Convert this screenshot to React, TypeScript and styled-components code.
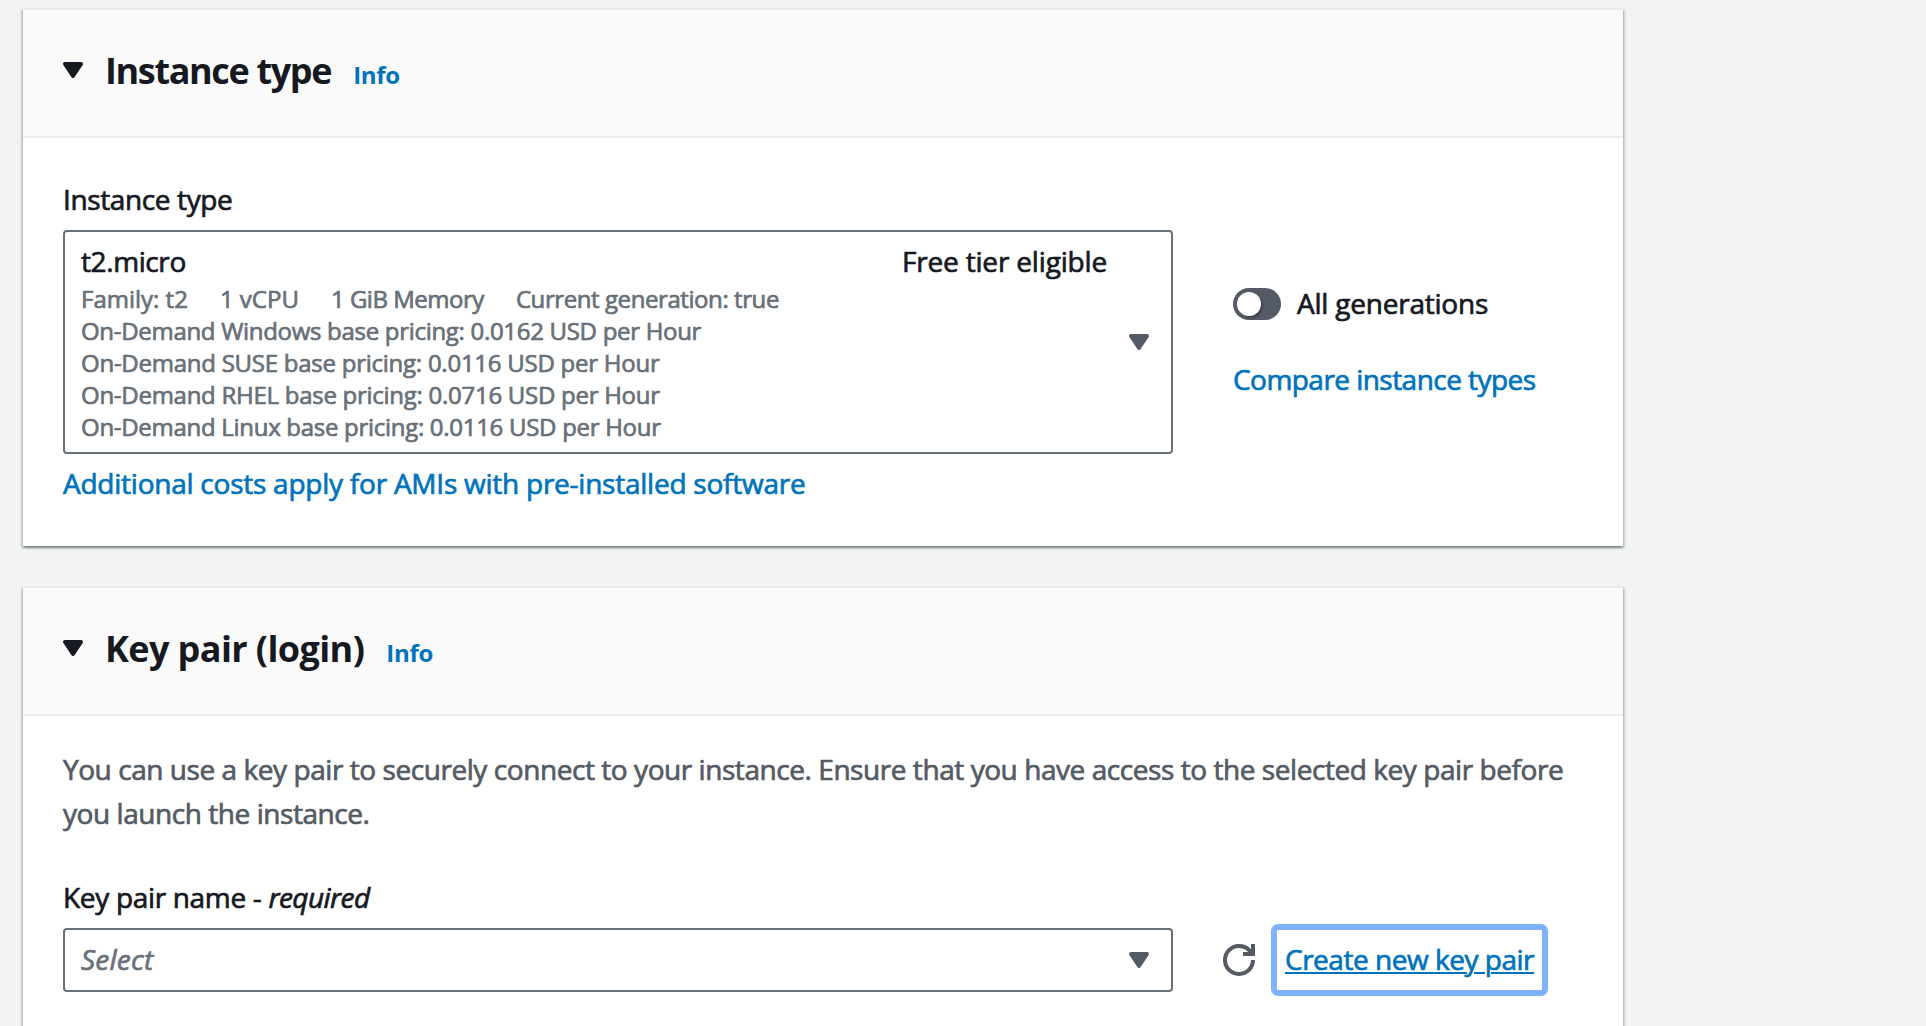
import React from 'react';
import styled, { createGlobalStyle } from 'styled-components';

const color = {
  page: '#f2f3f3',
  headerBg: '#fafafa',
  divider: '#eaeded',
  text: '#16191f',
  body: '#545b64',
  muted: '#687078',
  link: '#0073bb',
  focus: '#80b1fc',
};

const GlobalStyle = createGlobalStyle`
  * { box-sizing: border-box; }
  body {
    margin: 0;
    background: ${color.page};
    color: ${color.text};
    font-family: "Open Sans", "Noto Sans", sans-serif;
    font-size: 28px;
    line-height: 44px;
    -webkit-text-stroke: 0.7px currentColor;
  }
`;

interface Tracked {
  $track?: number;
}

const Page = styled.main`
  display: flex;
  flex-direction: column;
  gap: 40px;
  height: 100vh;
  padding: 8px 0 0 23px;
  overflow: hidden;
`;

const Panel = styled.section`
  flex: none;
  width: 1600px;
  background: #fff;
  border-top: 2px solid ${color.divider};
  box-shadow:
    0 2px 2px 0 rgba(0, 28, 36, 0.3),
    2px 2px 2px 0 rgba(0, 28, 36, 0.15),
    -2px 2px 2px 0 rgba(0, 28, 36, 0.15);
`;

const PanelHeader = styled.header`
  display: flex;
  align-items: flex-start;
  height: 128px;
  padding: 38px 40px 0 34px;
  background: ${color.headerBg};
  border-bottom: 2px solid ${color.divider};
`;

const HeaderCaret = styled.span`
  display: flex;
  height: 44px;
  align-items: center;
  margin-right: 16px;
`;

const TitleLine = styled.div`
  display: flex;
  align-items: baseline;
  gap: 22px;
  padding-top: 1px;
`;

const Title = styled.h2<Tracked>`
  margin: 0;
  font-size: 36px;
  font-weight: 700;
  line-height: 44px;
  letter-spacing: ${(p) => p.$track ?? 0}px;
  -webkit-text-stroke: 0;
`;

const InfoLink = styled.a`
  color: ${color.link};
  font-size: 24px;
  font-weight: 700;
  line-height: 32px;
  letter-spacing: -0.3px;
  -webkit-text-stroke: 0;
`;

const InstanceBody = styled.div`
  display: flex;
  align-items: flex-start;
  gap: 60px;
  height: 408px;
  padding: 39px 40px 0;
`;

const KeyPairBody = styled.div`
  height: 360px;
  padding: 31px 40px 0;
`;

const Field = styled.div`
  display: flex;
  flex-direction: column;
  width: 1110px;
`;

const Label = styled.label<Tracked>`
  display: block;
  margin-bottom: 9px;
  letter-spacing: ${(p) => p.$track ?? 0}px;

  em {
    letter-spacing: -0.55px;
  }
`;

const SelectBox = styled.div<{ $tall?: boolean }>`
  display: flex;
  align-items: center;
  width: 1110px;
  height: ${(p) => (p.$tall ? 224 : 64)}px;
  padding: 0 16px;
  background: #fff;
  border: 2px solid ${color.muted};
  border-radius: 4px;
`;

const Option = styled.div`
  flex: 1;
  display: flex;
  flex-direction: column;
  gap: 2px;
`;

const OptionTitle = styled.div`
  display: flex;
  justify-content: space-between;
  line-height: 40px;
`;

const OptionLines = styled.div`
  color: ${color.muted};
  font-size: 24px;
  line-height: 32px;
`;

const SpecRow = styled.div`
  display: flex;
  gap: 32px;
`;

const Text = styled.span<Tracked>`
  display: block;
  letter-spacing: ${(p) => p.$track ?? 0}px;
  white-space: nowrap;
`;

const Placeholder = styled.span`
  flex: 1;
  padding-bottom: 2px;
  color: ${color.muted};
  font-style: italic;
  letter-spacing: 0.25px;
`;

const BoxCaret = styled.span`
  display: flex;
  margin-left: 16px;
  color: ${color.body};
`;

const Link = styled.a<Tracked>`
  color: ${color.link};
  letter-spacing: ${(p) => p.$track ?? 0}px;
  white-space: nowrap;
`;

const CostLink = styled(Link)`
  margin-top: 7px;
`;

const Side = styled.div`
  display: flex;
  flex-direction: column;
  align-items: flex-start;
  gap: 32px;
  padding-top: 104px;
`;

const ToggleRow = styled.div`
  display: flex;
  gap: 16px;
`;

const Toggle = styled.span`
  display: flex;
  width: 48px;
  height: 32px;
  margin-top: 7px;
  padding: 4px;
  background: ${color.body};
  border-radius: 16px;
`;

const Knob = styled.span`
  width: 24px;
  height: 24px;
  background: #fff;
  border-radius: 50%;
  box-shadow: 2px 2px 2px rgba(0, 0, 0, 0.25);
`;

const Description = styled.p`
  margin: 0 0 40px;
  color: ${color.body};
  letter-spacing: -0.44px;
`;

const KeyPairRow = styled.div`
  display: flex;
  align-items: center;
`;

const RefreshButton = styled.button`
  display: flex;
  margin: 0 16px 0 50px;
  padding: 0;
  background: none;
  border: 0;
  color: ${color.body};
`;

const CreateLink = styled.a`
  height: 72px;
  margin: -4px 0;
  padding: 7px 8px 0;
  border: 6px solid ${color.focus};
  border-radius: 7px;
  color: ${color.link};
  letter-spacing: -0.48px;
  white-space: nowrap;
  text-decoration: underline;
  text-decoration-thickness: 2px;
  text-underline-offset: 2px;
`;

const Caret = () => (
  <svg width="32" height="32" viewBox="0 0 16 16" aria-hidden="true">
    <path d="M4 5h8l-4 6-4-6z" fill="currentColor" stroke="currentColor" strokeWidth="2" strokeLinejoin="round" />
  </svg>
);

const RefreshIcon = () => (
  <svg width="32" height="32" viewBox="0 0 16 16" fill="none" stroke="currentColor" strokeWidth="2" aria-hidden="true">
    <path d="M10 5h5V0" />
    <path d="M15 8a6.957 6.957 0 0 1-7 7 6.957 6.957 0 0 1-7-7 6.957 6.957 0 0 1 7-7 6.87 6.87 0 0 1 6.3 4" />
  </svg>
);

interface HeaderProps {
  title: string;
  track: number;
}

const SectionHeader = ({ title, track }: HeaderProps) => (
  <PanelHeader>
    <HeaderCaret>
      <Caret />
    </HeaderCaret>
    <TitleLine>
      <Title $track={track}>{title}</Title>
      <InfoLink>Info</InfoLink>
    </TitleLine>
  </PanelHeader>
);

const specs = [
  { text: 'Family: t2', track: 0 },
  { text: '1 vCPU', track: 0 },
  { text: '1 GiB Memory', track: -0.48 },
  { text: 'Current generation: true', track: -0.42 },
];

const prices = [
  { text: 'On-Demand Windows base pricing: 0.0162 USD per Hour', track: -0.3 },
  { text: 'On-Demand SUSE base pricing: 0.0116 USD per Hour', track: -0.25 },
  { text: 'On-Demand RHEL base pricing: 0.0716 USD per Hour', track: -0.27 },
  { text: 'On-Demand Linux base pricing: 0.0116 USD per Hour', track: -0.29 },
];

export default function App() {
  return (
    <>
      <GlobalStyle />
      <Page>
        <Panel>
          <SectionHeader title="Instance type" track={-1.36} />
          <InstanceBody>
            <Field>
              <Label $track={-0.38}>Instance type</Label>
              <SelectBox $tall>
                <Option>
                  <OptionTitle>
                    <Text $track={-0.4}>t2.micro</Text>
                    <Text $track={-0.17}>Free tier eligible</Text>
                  </OptionTitle>
                  <OptionLines>
                    <SpecRow>
                      {specs.map((s) => (
                        <Text key={s.text} $track={s.track}>{s.text}</Text>
                      ))}
                    </SpecRow>
                    {prices.map((p) => (
                      <Text key={p.text} $track={p.track}>{p.text}</Text>
                    ))}
                  </OptionLines>
                </Option>
                <BoxCaret>
                  <Caret />
                </BoxCaret>
              </SelectBox>
              <CostLink $track={-0.24}>Additional costs apply for AMIs with pre-installed software</CostLink>
            </Field>
            <Side>
              <ToggleRow>
                <Toggle>
                  <Knob />
                </Toggle>
                <Text $track={-0.22}>All generations</Text>
              </ToggleRow>
              <Link $track={-0.54}>Compare instance types</Link>
            </Side>
          </InstanceBody>
        </Panel>

        <Panel>
          <SectionHeader title="Key pair (login)" track={-0.6} />
          <KeyPairBody>
            <Description>
              You can use a key pair to securely connect to your instance. Ensure that you have access to the selected
              key pair before you launch the instance.
            </Description>
            <Label $track={-0.32}>
              Key pair name - <em>required</em>
            </Label>
            <KeyPairRow>
              <SelectBox>
                <Placeholder>Select</Placeholder>
                <BoxCaret>
                  <Caret />
                </BoxCaret>
              </SelectBox>
              <RefreshButton aria-label="Refresh key pairs">
                <RefreshIcon />
              </RefreshButton>
              <CreateLink>Create new key pair</CreateLink>
            </KeyPairRow>
          </KeyPairBody>
        </Panel>
      </Page>
    </>
  );
}
